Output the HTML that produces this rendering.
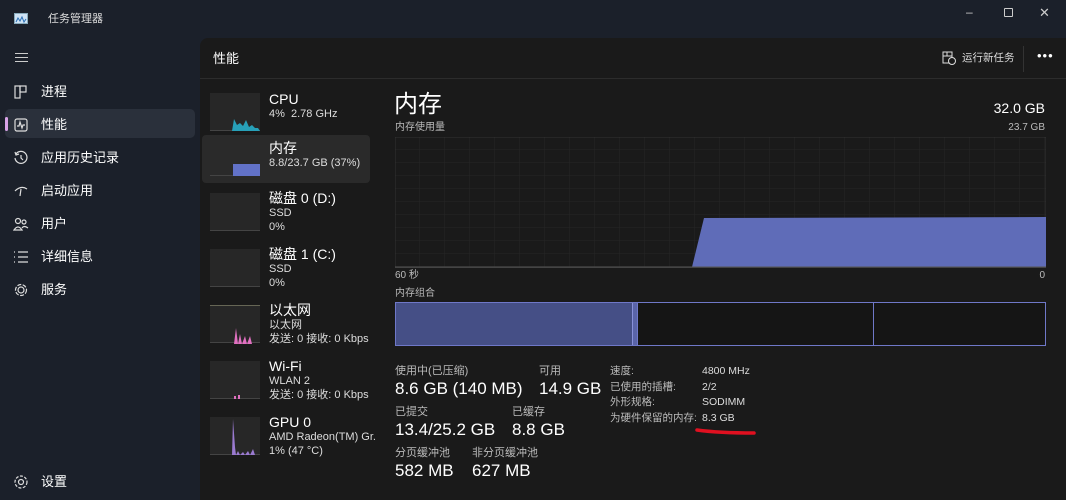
<!DOCTYPE html>
<html><head><meta charset="utf-8"><style>
*{margin:0;padding:0;box-sizing:border-box}
body{width:1066px;height:500px;background:#1b202a;font-family:"Liberation Sans","Noto Sans CJK SC",sans-serif;color:#fff;position:relative;overflow:hidden;line-height:1.2}
.a{position:absolute;white-space:nowrap}
.nav{font-size:13px;color:#fff}
.ic{position:absolute;left:13px;width:16px;height:16px}
.main{position:absolute;left:200px;top:38px;width:866px;height:462px;background:#1a1a1a;border-top-left-radius:8px}
.thumb{position:absolute;left:10px;width:50px;height:38px;background:#272727;border-bottom:1px solid #444}
.t1{font-size:14px}
.t2{font-size:11px;color:#ddd}
.lbl{font-size:11px;color:#bbb}
.val{font-size:17px}
</style></head><body>
<svg class="a" style="left:14px;top:13px" width="14" height="12"><rect x="0.5" y="0.5" width="13" height="10" fill="#cfe3f5" stroke="#8ab"/><polyline points="2,9 4,5 6,8 8,4 10,9 12,6" fill="none" stroke="#2a6fb5"/></svg>
<div class="a" style="left:48px;top:13px;font-size:11px;color:#ddd">任务管理器</div>
<div class="a" style="left:966px;top:5px;font-size:12px;color:#ccc">–</div>
<div class="a" style="left:1004px;top:8px;width:9px;height:9px;border:1px solid #ccc;border-radius:1px"></div>
<div class="a" style="left:1039px;top:5px;font-size:13px;color:#ccc">✕</div>

<div class="a" style="left:15px;top:53px;width:13px;height:9px;border-top:1px solid #ccc;border-bottom:1px solid #ccc"></div>
<div class="a" style="left:15px;top:57px;width:13px;height:1px;background:#ccc"></div>

<svg class="ic" style="top:84px" viewBox="0 0 16 16" fill="none" stroke="#ddd" stroke-width="1.2"><rect x="2" y="2" width="5" height="12"/><rect x="7" y="2" width="6" height="6"/></svg>
<div class="a nav" style="left:41px;top:84px">进程</div>
<div class="a" style="left:5px;top:109px;width:190px;height:29px;background:#2a303b;border-radius:5px"></div>
<div class="a" style="left:5px;top:117px;width:3px;height:14px;background:#d9a3e8;border-radius:2px"></div>
<svg class="ic" style="top:117px" viewBox="0 0 16 16" fill="none" stroke="#ddd" stroke-width="1.2"><rect x="2" y="2" width="12" height="12" rx="2"/><polyline points="4,9 6,9 7,5 9,11 10,8 12,8"/></svg>
<div class="a nav" style="left:41px;top:117px">性能</div>
<svg class="ic" style="top:150px" viewBox="0 0 16 16" fill="none" stroke="#ddd" stroke-width="1.2"><path d="M3 4A6 6 0 1 1 2 8"/><polyline points="2,2 3,5 6,4"/><polyline points="8,5 8,8 10,10"/></svg>
<div class="a nav" style="left:41px;top:150px">应用历史记录</div>
<svg class="ic" style="top:183px" viewBox="0 0 16 16" fill="none" stroke="#ddd" stroke-width="1.2"><path d="M2 8Q8 2 14 6M8 6L7 13"/></svg>
<div class="a nav" style="left:41px;top:183px">启动应用</div>
<svg class="ic" style="top:216px" viewBox="0 0 16 16" fill="none" stroke="#ddd" stroke-width="1.2"><circle cx="5" cy="5" r="2.5"/><circle cx="11" cy="6" r="2"/><path d="M1 14Q5 8 9 14ZM9 12Q11 9 15 12"/></svg>
<div class="a nav" style="left:41px;top:216px">用户</div>
<svg class="ic" style="top:249px" viewBox="0 0 16 16" fill="none" stroke="#ddd" stroke-width="1.2"><path d="M1 3h1M1 8h1M1 13h1M5 3h10M5 8h10M5 13h10"/></svg>
<div class="a nav" style="left:41px;top:249px">详细信息</div>
<svg class="ic" style="top:282px" viewBox="0 0 16 16" fill="none" stroke="#ddd" stroke-width="1.2"><circle cx="8" cy="8" r="5.5" stroke-dasharray="4 1.5"/><circle cx="8" cy="8" r="3"/></svg>
<div class="a nav" style="left:41px;top:282px">服务</div>
<svg class="ic" style="top:474px" viewBox="0 0 16 16" fill="none" stroke="#ddd" stroke-width="1.2"><circle cx="8" cy="8" r="6" stroke-dasharray="3 1.5"/><circle cx="8" cy="8" r="2.5"/></svg>
<div class="a nav" style="left:41px;top:474px">设置</div>

<div class="main">
<div class="a" style="left:13px;top:13px;font-size:13px">性能</div>
<svg class="a" style="left:742px;top:13px" width="14" height="14" viewBox="0 0 14 14" fill="none" stroke="#ddd"><rect x="1" y="1" width="9" height="11"/><line x1="1" y1="5" x2="10" y2="5"/><line x1="5" y1="1" x2="5" y2="5"/><circle cx="10" cy="10" r="3.5" fill="#1a1a1a"/></svg>
<div class="a" style="left:762px;top:14px;font-size:10.5px;color:#ddd">运行新任务</div>
<div class="a" style="left:823px;top:8px;width:1px;height:26px;background:#333"></div>
<div class="a" style="left:837px;top:10px;font-size:13px;letter-spacing:1px">•••</div>
<div class="a" style="left:0;top:40px;width:866px;height:1px;background:#2c2c2c"></div>

<div class="thumb" style="top:55px"><svg width="50" height="38"><polygon points="22,38 24,26 27,32 30,30 33,33 36,27 39,34 42,32 45,35 48,35 50,38" fill="#27a0b8"/></svg></div>
<div class="a t1" style="left:69px;top:53px">CPU</div><div class="a t2" style="left:69px;top:70px">4%&nbsp; 2.78 GHz</div>
<div class="a" style="left:2px;top:97px;width:168px;height:48px;background:#2a2a2a;border-radius:4px"></div>
<div class="thumb" style="top:100px;background:#2a2a2a"><div class="a" style="left:23px;top:26px;width:27px;height:12px;background:#6272c8"></div></div>
<div class="a t1" style="left:69px;top:102px">内存</div><div class="a t2" style="left:69px;top:119px">8.8/23.7 GB (37%)</div>
<div class="thumb" style="top:155px"></div>
<div class="a t1" style="left:69px;top:152px">磁盘 0 (D:)</div><div class="a t2" style="left:69px;top:169px">SSD</div><div class="a t2" style="left:69px;top:183px">0%</div>
<div class="thumb" style="top:211px"></div>
<div class="a t1" style="left:69px;top:208px">磁盘 1 (C:)</div><div class="a t2" style="left:69px;top:225px">SSD</div><div class="a t2" style="left:69px;top:239px">0%</div>
<div class="thumb" style="top:267px;border-top:1px solid #665"><svg width="50" height="38"><polygon points="24,38 26,22 28,38 30,28 32,38 35,30 37,38 40,30 42,38" fill="#e070c0"/></svg></div>
<div class="a t1" style="left:69px;top:264px">以太网</div><div class="a t2" style="left:69px;top:281px">以太网</div><div class="a t2" style="left:69px;top:295px">发送: 0 接收: 0 Kbps</div>
<div class="thumb" style="top:323px"><svg width="50" height="38"><rect x="24" y="35" width="2" height="3" fill="#e070c0"/><rect x="28" y="34" width="2" height="4" fill="#e070c0"/></svg></div>
<div class="a t1" style="left:69px;top:320px">Wi-Fi</div><div class="a t2" style="left:69px;top:337px">WLAN 2</div><div class="a t2" style="left:69px;top:351px">发送: 0 接收: 0 Kbps</div>
<div class="thumb" style="top:379px"><svg width="50" height="38"><polygon points="22,38 23,2 25,30 26,38 28,34 30,38 33,35 35,38 38,34 40,38 43,32 45,38" fill="#9a7ad0"/></svg></div>
<div class="a t1" style="left:69px;top:376px">GPU 0</div><div class="a t2" style="left:69px;top:393px">AMD Radeon(TM) Gr.</div><div class="a t2" style="left:69px;top:407px">1% (47 °C)</div>

<div class="a" style="left:194px;top:53px;font-size:24px">内存</div>
<div class="a" style="right:21px;top:62px;font-size:14px">32.0 GB</div>
<div class="a lbl" style="left:195px;top:84px;font-size:10px">内存使用量</div>
<div class="a lbl" style="right:21px;top:84px;font-size:10px">23.7 GB</div>
<svg class="a" style="left:195px;top:99px" width="651" height="131">
<defs><pattern id="g" width="25" height="13" patternUnits="userSpaceOnUse"><path d="M25 0V13M0 13H25" stroke="#262626" fill="none"/></pattern></defs>
<rect width="651" height="131" fill="url(#g)" stroke="#333"/>
<polygon points="297,130 309,81 651,80 651,130" fill="#5f6cb8"/>
<line x1="0" y1="130" x2="651" y2="130" stroke="#555"/>
</svg>
<div class="a lbl" style="left:195px;top:232px;font-size:10px">60 秒</div>
<div class="a lbl" style="right:21px;top:232px;font-size:10px">0</div>
<div class="a lbl" style="left:195px;top:250px;font-size:10px">内存组合</div>
<div class="a" style="left:195px;top:264px;width:651px;height:44px;border:1px solid #6f78c8;background:#151515"></div>
<div class="a" style="left:196px;top:265px;width:236px;height:42px;background:#454f86"></div>
<div class="a" style="left:432px;top:265px;width:5px;height:42px;background:#5a64a8;border-left:1px solid #8890d8"></div>
<div class="a" style="left:437px;top:265px;width:1px;height:42px;background:#6f78c8"></div>
<div class="a" style="left:673px;top:265px;width:1px;height:42px;background:#6f78c8"></div>

<div class="a lbl" style="left:195px;top:327px">使用中(已压缩)</div>
<div class="a val" style="left:195px;top:341px">8.6 GB (140 MB)</div>
<div class="a lbl" style="left:339px;top:327px">可用</div>
<div class="a val" style="left:339px;top:341px">14.9 GB</div>
<div class="a lbl" style="left:195px;top:368px">已提交</div>
<div class="a val" style="left:195px;top:382px">13.4/25.2 GB</div>
<div class="a lbl" style="left:312px;top:368px">已缓存</div>
<div class="a val" style="left:312px;top:382px">8.8 GB</div>
<div class="a lbl" style="left:195px;top:409px">分页缓冲池</div>
<div class="a val" style="left:195px;top:423px">582 MB</div>
<div class="a lbl" style="left:272px;top:409px">非分页缓冲池</div>
<div class="a val" style="left:272px;top:423px">627 MB</div>

<div class="a lbl" style="left:410px;top:327px;font-size:10.5px">速度:</div><div class="a t2" style="left:502px;top:327px;font-size:10.5px">4800 MHz</div>
<div class="a lbl" style="left:410px;top:343px;font-size:10.5px">已使用的插槽:</div><div class="a t2" style="left:502px;top:343px;font-size:10.5px">2/2</div>
<div class="a lbl" style="left:410px;top:358px;font-size:10.5px">外形规格:</div><div class="a t2" style="left:502px;top:358px;font-size:10.5px">SODIMM</div>
<div class="a lbl" style="left:410px;top:374px;font-size:10.5px">为硬件保留的内存:</div><div class="a t2" style="left:502px;top:374px;font-size:10.5px">8.3 GB</div>
<svg class="a" style="left:494px;top:385px" width="64" height="14"><path d="M3 7Q25 10 60 10" stroke="#e01020" stroke-width="3.5" fill="none" stroke-linecap="round"/></svg>
</div>
</body></html>
